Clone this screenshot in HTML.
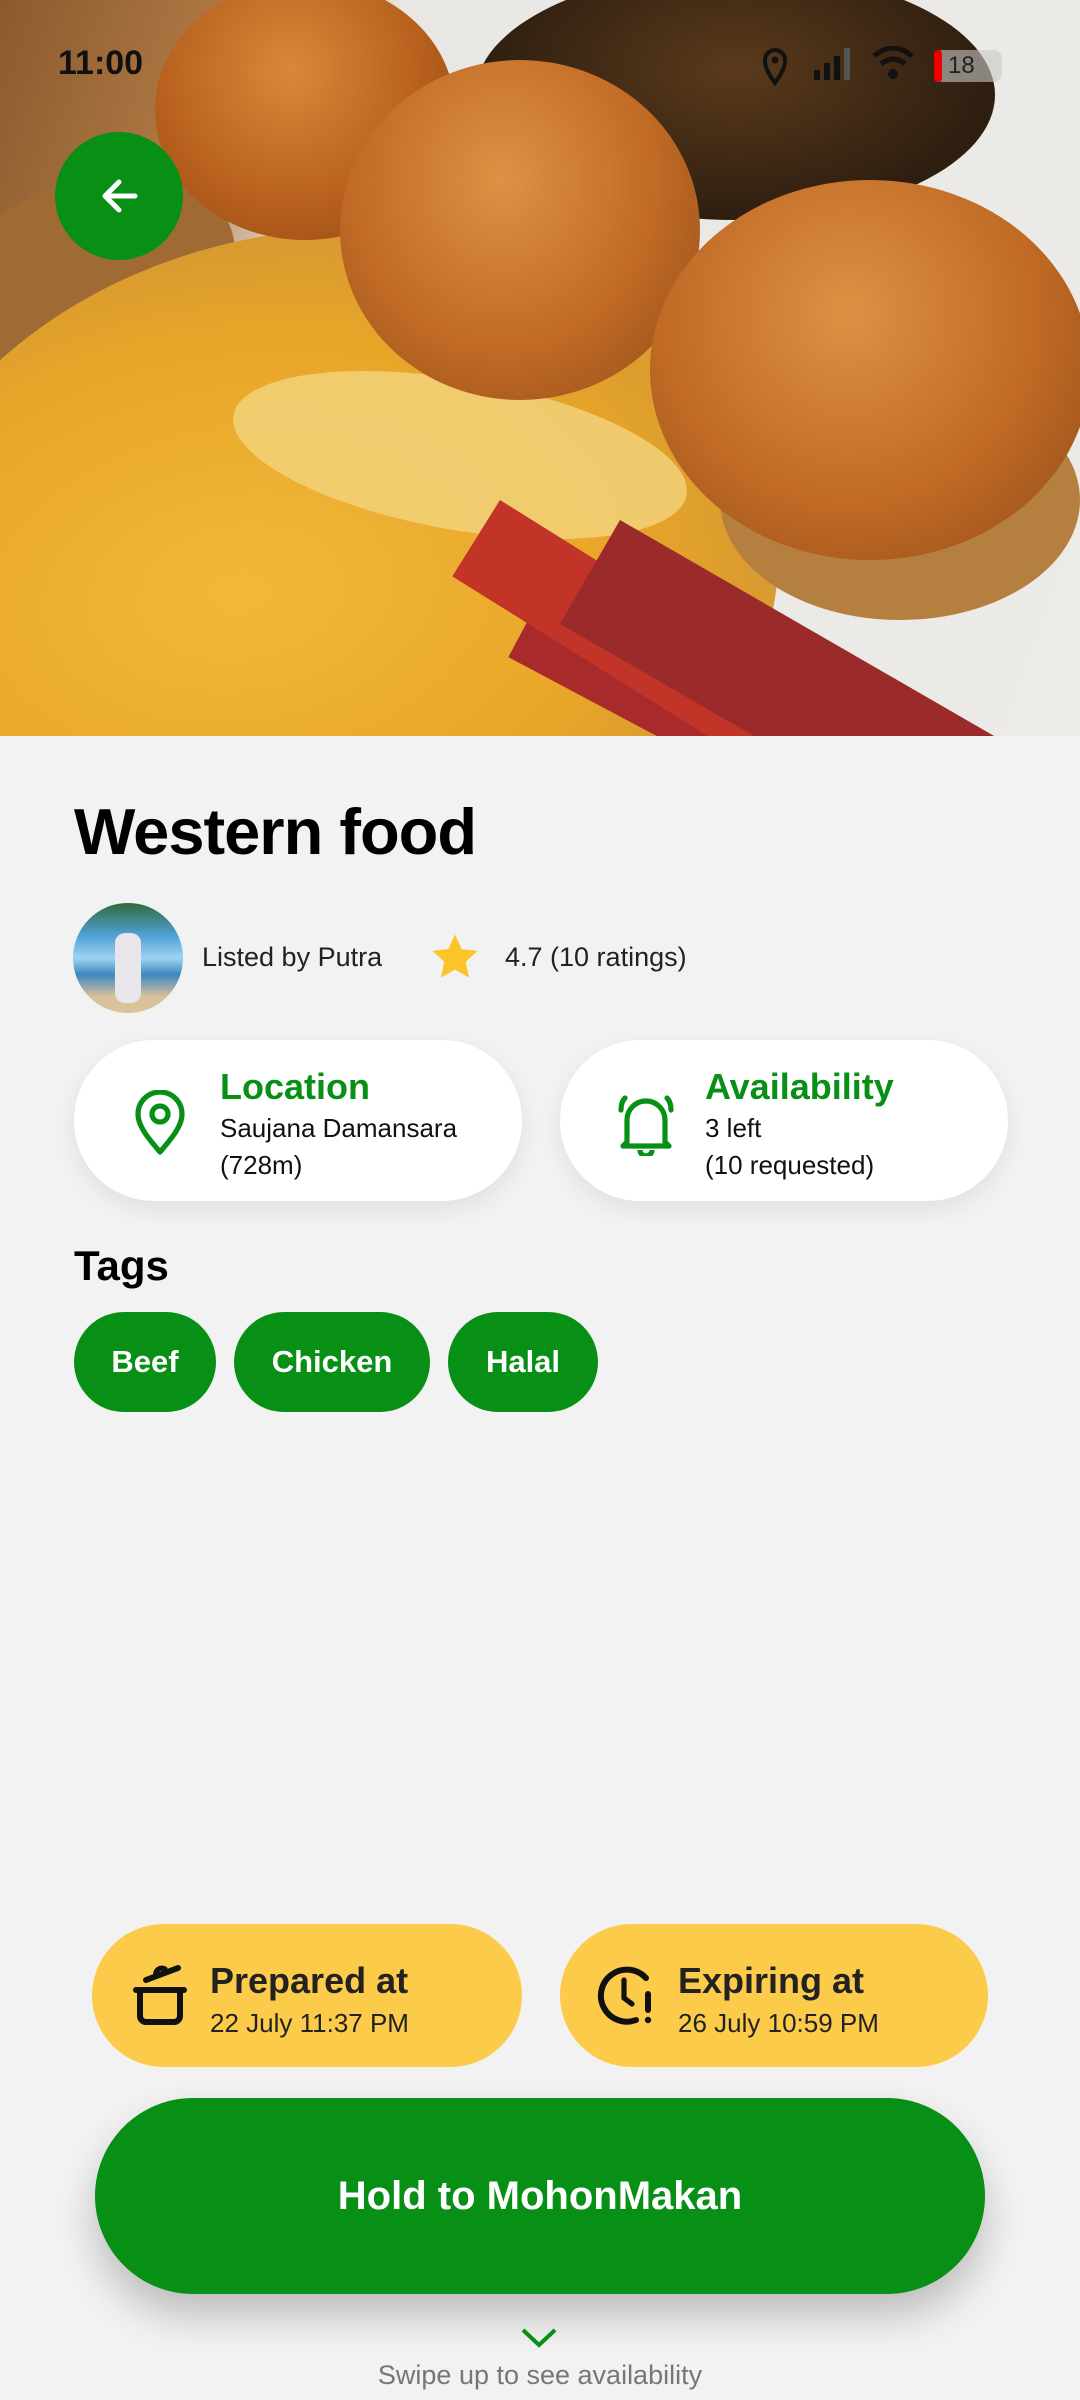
<!DOCTYPE html>
<html><head><meta charset="utf-8"><style>
*{margin:0;padding:0;box-sizing:border-box}
body{width:1080px;height:2400px;background:#f2f2f2;font-family:"Liberation Sans",sans-serif;position:relative;overflow:hidden}
.abs{position:absolute}
#photo{position:absolute;left:0;top:0;width:1080px;height:736px;overflow:hidden;background:linear-gradient(110deg,#8a5a2e 0%,#b07a44 18%,#e9e7e3 30%,#ecebe8 100%)}
.e{position:absolute;border-radius:50%}
.card{position:absolute;background:#fff;border-radius:80px;box-shadow:0 8px 24px rgba(0,0,0,0.08)}
.green{color:#079015}
.chip{position:absolute;top:1312px;height:100px;border-radius:50px;background:#079015;color:#fff;font-weight:bold;font-size:31px;display:flex;align-items:center;justify-content:center}
.ycard{position:absolute;top:1924px;height:143px;border-radius:72px;background:#fdcb4a}
</style></head><body>
<div id="photo">
  <div class="e" style="left:-60px;top:180px;width:300px;height:200px;background:#a06a34;transform:rotate(-20deg)"></div>
  <div class="e" style="left:475px;top:-30px;width:520px;height:250px;background:radial-gradient(ellipse at 50% 40%,#5a3a1c,#2e1e10 70%)"></div>
  <div class="e" style="left:-120px;top:230px;width:900px;height:700px;background:radial-gradient(ellipse at 40% 50%,#f2b83a,#e8a628 50%,#d99a30 70%);transform:rotate(-8deg)"></div>
  <div class="e" style="left:230px;top:380px;width:460px;height:150px;background:#f3d57e;transform:rotate(10deg);opacity:.8"></div>
  <div class="e" style="left:720px;top:380px;width:360px;height:240px;background:#b5803f"></div>
  <div class="e" style="left:155px;top:-20px;width:300px;height:260px;background:radial-gradient(ellipse at 45% 35%,#d8883a,#b55e1c 60%,#8c4512)"></div>
  <div class="e" style="left:340px;top:60px;width:360px;height:340px;background:radial-gradient(ellipse at 45% 35%,#de9145,#c06a25 55%,#8f4a17)"></div>
  <div class="e" style="left:650px;top:180px;width:440px;height:380px;background:radial-gradient(ellipse at 45% 35%,#de9145,#c06a25 55%,#8f4a17)"></div>
  <div class="abs" style="left:560px;top:560px;width:520px;height:110px;background:#a82a2a;transform:rotate(28deg);transform-origin:0 0"></div>
  <div class="abs" style="left:500px;top:500px;width:480px;height:90px;background:#c23328;transform:rotate(32deg);transform-origin:0 0"></div>
  <div class="abs" style="left:620px;top:520px;width:470px;height:120px;background:#9b2b2b;transform:rotate(30deg);transform-origin:0 0"></div>
  <div class="abs" style="left:58px;top:44px;font-size:34px;font-weight:bold;color:#111">11:00</div>
  <svg class="abs" style="left:762px;top:46px" width="26" height="40" viewBox="0 0 26 40"><path d="M13 37C6 27 3 21 3 14a10 10 0 0 1 20 0c0 7-3 13-10 23z" stroke="#111" stroke-width="4" fill="none"/><circle cx="13" cy="14" r="3.5" fill="#111"/></svg>
  <svg class="abs" style="left:814px;top:48px" width="40" height="34"><rect x="0" y="22" width="6" height="10" fill="#111"/><rect x="10" y="15" width="6" height="17" fill="#111"/><rect x="20" y="8" width="6" height="24" fill="#111"/><rect x="30" y="0" width="6" height="32" fill="#555"/></svg>
  <svg class="abs" style="left:872px;top:46px" width="42" height="36" viewBox="0 0 42 36"><path d="M2 10 Q21 -6 40 10" stroke="#111" stroke-width="5" fill="none"/><path d="M9 18 Q21 8 33 18" stroke="#111" stroke-width="5" fill="none"/><circle cx="21" cy="28" r="5" fill="#111"/></svg>
  <div class="abs" style="left:934px;top:50px;width:68px;height:32px;border-radius:9px;background:rgba(200,200,200,.6);font-size:24px;color:#222;padding-left:14px;line-height:32px">18</div>
  <div class="abs" style="left:934px;top:50px;width:8px;height:32px;border-radius:4px;background:#e00"></div>
  <div class="abs" style="left:55px;top:132px;width:128px;height:128px;border-radius:50%;background:#079015"></div>
  <svg class="abs" style="left:95px;top:172px" width="48" height="48" viewBox="0 0 48 48"><path d="M40 24H10M24 10L10 24l14 14" stroke="#fff" stroke-width="5" fill="none" stroke-linecap="round" stroke-linejoin="round"/></svg>
</div>

<div class="abs" style="left:74px;top:794px;font-size:65px;font-weight:bold;color:#000;letter-spacing:-1px">Western food</div>

<div class="abs" style="left:73px;top:903px;width:110px;height:110px;border-radius:50%;background:linear-gradient(180deg,#2f6a3a 0%,#4fa3d8 30%,#9fd3ef 50%,#3d88c2 65%,#d8c29a 85%);overflow:hidden">
  <div class="abs" style="left:42px;top:30px;width:26px;height:70px;background:#e8e6ea;border-radius:10px"></div>
</div>
<div class="abs" style="left:202px;top:942px;font-size:27px;color:#222">Listed by Putra</div>
<svg class="abs" style="left:428px;top:930px" width="54" height="54" viewBox="0 0 24 24"><path d="M12 2l3 6.5 7 .8-5.2 4.8 1.4 7L12 17.6 5.8 21.1l1.4-7L2 9.3l7-.8z" fill="#fcc42b"/></svg>
<div class="abs" style="left:505px;top:942px;font-size:27px;color:#222">4.7 (10 ratings)</div>

<div class="card" style="left:74px;top:1040px;width:448px;height:161px"></div>
<svg class="abs" style="left:134px;top:1090px" width="52" height="66" viewBox="0 0 26 33"><path d="M13 31C7 24 2 18 2 12a11 11 0 0 1 22 0c0 6-5 12-11 19z" stroke="#079015" stroke-width="2.6" fill="none" stroke-linejoin="round"/><circle cx="13" cy="12" r="4" stroke="#079015" stroke-width="2.6" fill="none"/></svg>
<div class="abs green" style="left:220px;top:1066px;font-size:36px;font-weight:bold">Location</div>
<div class="abs" style="left:220px;top:1110px;font-size:26px;color:#111;line-height:37px">Saujana Damansara<br>(728m)</div>

<div class="card" style="left:560px;top:1040px;width:448px;height:161px"></div>
<svg class="abs" style="left:615px;top:1090px" width="62" height="66" viewBox="0 0 31 33"><path d="M6 26V15a9.5 9.5 0 0 1 19 0v11l2 2H4z" stroke="#079015" stroke-width="2.6" fill="none" stroke-linejoin="round"/><path d="M12.5 30a3 3 0 0 0 6 0" stroke="#079015" stroke-width="2.6" fill="none"/><path d="M3 10q0-4 2-6M28 10q0-4-2-6" stroke="#079015" stroke-width="2.6" fill="none" stroke-linecap="round"/></svg>
<div class="abs green" style="left:705px;top:1066px;font-size:36px;font-weight:bold">Availability</div>
<div class="abs" style="left:705px;top:1110px;font-size:26px;color:#111;line-height:37px">3 left<br>(10 requested)</div>

<div class="abs" style="left:74px;top:1242px;font-size:42px;font-weight:bold;color:#000">Tags</div>
<div class="chip" style="left:74px;width:142px">Beef</div>
<div class="chip" style="left:234px;width:196px">Chicken</div>
<div class="chip" style="left:448px;width:150px">Halal</div>

<div class="ycard" style="left:92px;width:430px"></div>
<svg class="abs" style="left:130px;top:1960px" width="60" height="70" viewBox="0 0 30 35"><path d="M3 15h24M5 15v13a3 3 0 0 0 3 3h14a3 3 0 0 0 3-3V15" stroke="#111" stroke-width="3" fill="none" stroke-linecap="round"/><path d="M8 10l16-6" stroke="#111" stroke-width="3" stroke-linecap="round"/><path d="M13 8a3 3 0 0 1 5-3" stroke="#111" stroke-width="2.6" fill="none"/></svg>
<div class="abs" style="left:210px;top:1960px;font-size:36px;font-weight:bold;color:#222">Prepared at</div>
<div class="abs" style="left:210px;top:2008px;font-size:26px;color:#222">22 July 11:37 PM</div>

<div class="ycard" style="left:560px;width:428px"></div>
<svg class="abs" style="left:596px;top:1962px" width="60" height="66" viewBox="0 0 30 33"><path d="M20 29A13 13 0 1 1 25 8" stroke="#111" stroke-width="3" fill="none" stroke-linecap="round"/><path d="M14 9v9l4 3" stroke="#111" stroke-width="2.6" fill="none" stroke-linecap="round"/><path d="M26 16v8" stroke="#111" stroke-width="3" stroke-linecap="round"/><circle cx="26" cy="29" r="1.6" fill="#111"/></svg>
<div class="abs" style="left:678px;top:1960px;font-size:36px;font-weight:bold;color:#222">Expiring at</div>
<div class="abs" style="left:678px;top:2008px;font-size:26px;color:#222">26 July 10:59 PM</div>

<div class="abs" style="left:95px;top:2098px;width:890px;height:196px;border-radius:98px;background:#079015;box-shadow:0 22px 40px rgba(0,0,0,0.22);color:#fff;font-size:40px;font-weight:bold;display:flex;align-items:center;justify-content:center">Hold to MohonMakan</div>

<svg class="abs" style="left:520px;top:2326px" width="38" height="24" viewBox="0 0 38 24"><path d="M3 4l16 15L35 4" stroke="#079015" stroke-width="4" fill="none"/></svg>
<div class="abs" style="left:0;width:1080px;top:2360px;text-align:center;font-size:27px;color:#777">Swipe up to see availability</div>
</body></html>
